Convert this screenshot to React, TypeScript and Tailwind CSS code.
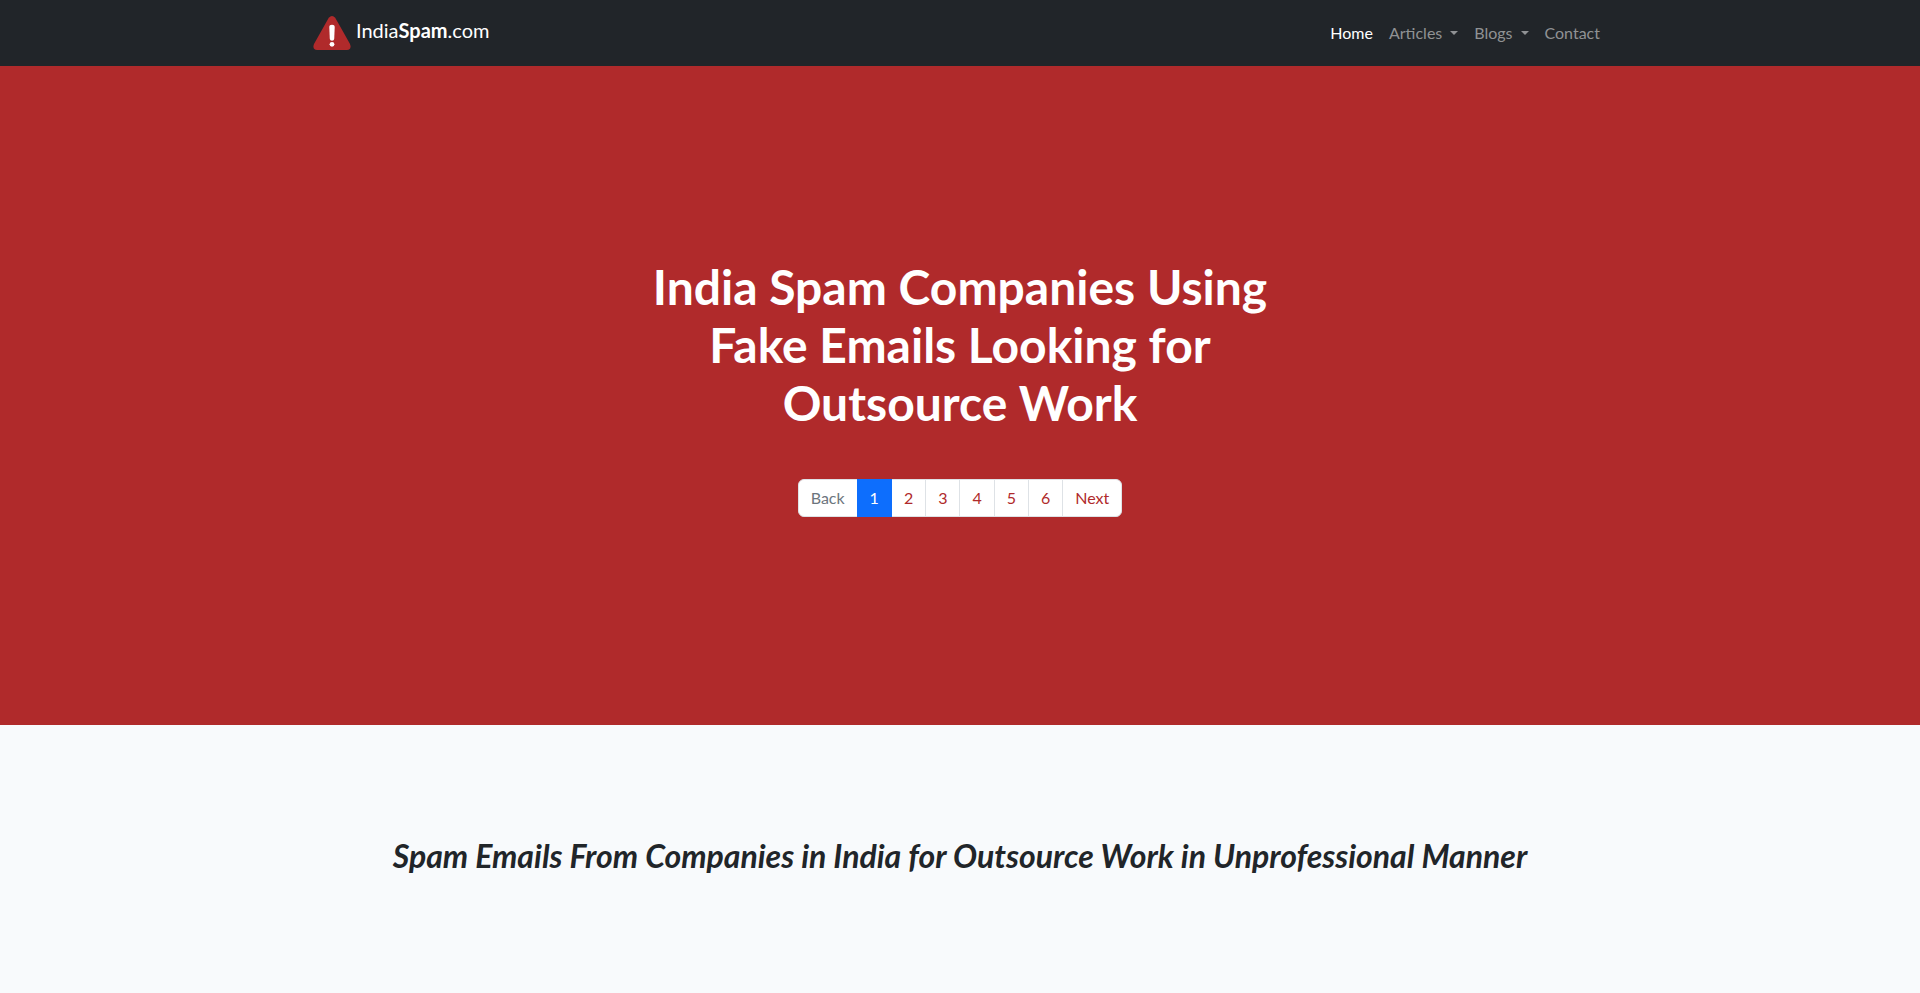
const navLinks = [
  { label: 'Home', href: '#home', active: true },
  { label: 'Articles', href: '#articles', dropdown: true },
  { label: 'Blogs', href: '#blogs', dropdown: true },
  { label: 'Contact', href: '#contact' },
]

const pages = ['2', '3', '4', '5', '6']

function WarningLogo() {
  return (
    <svg className="w-10 h-[35px]" viewBox="-1 0 40 35" aria-hidden="true">
      <path
        d="M15.8 1.8 Q19 -1.6 22.2 1.8 L37 28 Q39 33.4 34 34 H4 Q-1 33.4 1 28 Z"
        fill="#b02a2b"
      />
      <path
        d="M16.3 11 Q16.3 8.8 19 8.8 Q21.7 8.8 21.7 11 L21.2 23 Q21 24.8 19 24.8 Q17 24.8 16.8 23 Z"
        fill="#fff"
      />
      <circle cx="19" cy="28.3" r="2.4" fill="#fff" />
    </svg>
  )
}

function Navbar() {
  return (
    <header className="bg-[#212529]">
      <nav className="max-w-[1320px] mx-auto px-3 h-[66px] flex items-center justify-between">
        <a href="#home" className="flex items-center gap-1 text-xl leading-[30px] text-white">
          <WarningLogo />
          <span className="pb-1.5">
            India<b className="font-bold">Spam</b>.com
          </span>
        </a>
        <ul className="flex">
          {navLinks.map((link) => (
            <li key={link.label}>
              <a
                href={link.href}
                className={
                  link.active
                    ? 'flex items-center p-2 text-white'
                    : 'flex items-center p-2 text-[#909294]'
                }
              >
                {link.label}
                {link.dropdown && (
                  <span className="ml-2 border-t-4 border-x-4 border-x-transparent border-t-current" />
                )}
              </a>
            </li>
          ))}
        </ul>
      </nav>
    </header>
  )
}

function Pagination() {
  return (
    <nav aria-label="Pages">
      <ul className="flex justify-center mb-4 text-[#b02a2b]">
        <li>
          <button
            disabled
            className="block px-3 py-1.5 rounded-l-md border border-[#dee2e6] bg-white text-[#6c757d]"
          >
            Back
          </button>
        </li>
        <li className="-ml-px z-10">
          <a
            href="#page-1"
            aria-current="page"
            className="block px-3 py-1.5 border border-[#0d6efd] bg-[#0d6efd] text-white"
          >
            1
          </a>
        </li>
        {pages.map((page) => (
          <li key={page} className="-ml-px">
            <a href={`#page-${page}`} className="block px-3 py-1.5 border border-[#dee2e6] bg-white">
              {page}
            </a>
          </li>
        ))}
        <li className="-ml-px">
          <a href="#page-2" className="block px-3 py-1.5 rounded-r-md border border-[#dee2e6] bg-white">
            Next
          </a>
        </li>
      </ul>
    </nav>
  )
}

export default function App() {
  return (
    <div className="min-h-screen bg-[#f8fafc] font-['Lato','Liberation_Sans',sans-serif] text-base text-[#212529]">
      <Navbar />
      <main>
        <section className="bg-[#b02a2b] px-3 py-48 text-center">
          <h1 className="max-w-[636px] mx-auto mb-[47px] text-5xl leading-[58px] font-bold text-white">
            India Spam Companies Using Fake Emails Looking for Outsource Work
          </h1>
          <Pagination />
        </section>
        <section className="max-w-[1320px] mx-auto px-3 py-28 text-center">
          <h2 className="text-[32px] leading-[38px] font-bold italic">
            Spam Emails From Companies in India for Outsource Work in Unprofessional Manner
          </h2>
        </section>
      </main>
    </div>
  )
}
